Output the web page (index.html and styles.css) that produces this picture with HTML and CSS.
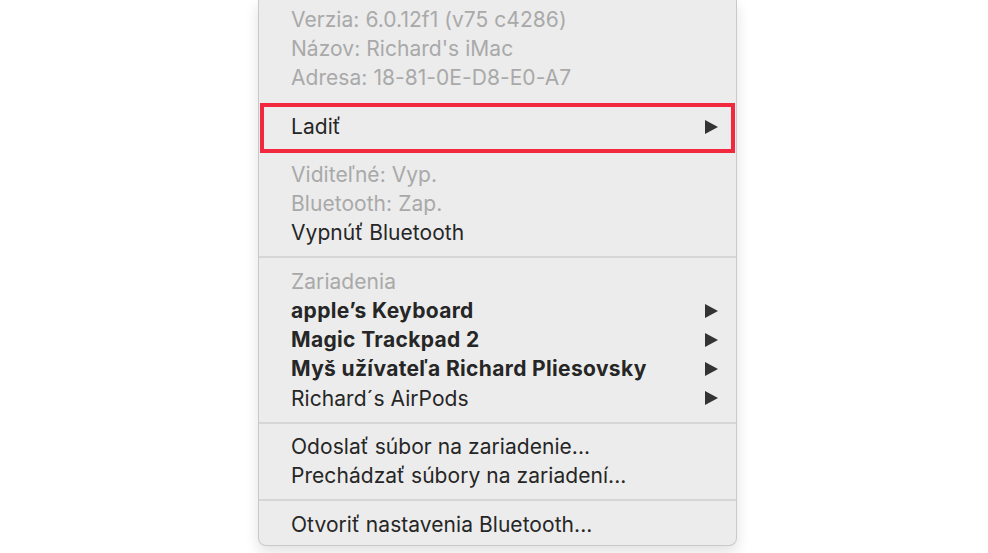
FILE: index.html
```html
<!DOCTYPE html>
<html lang="sk">
<head>
<meta charset="utf-8">
<title>Bluetooth menu</title>
<link rel="stylesheet" href="styles.css">
</head>
<body>
<div class="stage">
  <div class="menu">
    <div class="item dim">Verzia: 6.0.12f1 (v75 c4286)</div>
    <div class="item dim">Názov: Richard's iMac</div>
    <div class="item dim">Adresa: 18-81-0E-D8-E0-A7</div>
    <div class="mark">
      <div class="item sub"><span>Ladiť</span><span class="arrow"></span></div>
    </div>
    <div class="item dim">Viditeľné: Vyp.</div>
    <div class="item dim">Bluetooth: Zap.</div>
    <div class="item">Vypnúť Bluetooth</div>
    <div class="sep"></div>
    <div class="item dim">Zariadenia</div>
    <div class="item sub bold"><span>apple’s Keyboard</span><span class="arrow"></span></div>
    <div class="item sub bold"><span>Magic Trackpad 2</span><span class="arrow"></span></div>
    <div class="item sub bold"><span>Myš užívateľa Richard Pliesovsky</span><span class="arrow"></span></div>
    <div class="item sub"><span>Richard´s AirPods</span><span class="arrow"></span></div>
    <div class="sep"></div>
    <div class="item">Odoslať súbor na zariadenie...</div>
    <div class="item">Prechádzať súbory na zariadení...</div>
    <div class="sep"></div>
    <div class="item">Otvoriť nastavenia Bluetooth...</div>
  </div>
</div>
</body>
</html>
```
FILE: styles.css
```css
html, body {
  margin: 0;
  padding: 0;
  background: #ffffff;
}
.stage {
  width: 988px;
  height: 553px;
  overflow: hidden;
  display: flex;
  justify-content: flex-start;
  align-items: flex-start;
}
.menu {
  margin-left: 258px;
  width: 477px;
  background: #ececec;
  border: 1px solid #c9c9c9;
  border-top: none;
  border-radius: 0 0 8px 8px;
  box-shadow: 0 6px 14px rgba(0,0,0,0.12);
  padding: 4.5px 0 6px 0;
  font-family: Inter, "Noto Sans", sans-serif;
  font-size: 21px;
  color: #262626;
}
.item {
  height: 29.3px;
  line-height: 29.3px;
  padding: 0 18px 0 32px;
  white-space: nowrap;
  letter-spacing: 0.05px;
}
.dim {
  color: #a9a9a9;
}
.bold {
  font-weight: 700;
  letter-spacing: 0.35px;
}
.sub {
  display: flex;
  justify-content: space-between;
  align-items: center;
}
.arrow {
  width: 0;
  height: 0;
  border-top: 7px solid transparent;
  border-bottom: 7px solid transparent;
  border-left: 13px solid #333333;
}
.sep {
  height: 2px;
  background: #d6d6d6;
  margin: 8.5px 0;
}
.mark {
  margin: 10.5px 1px 6.5px 1px;
  border: 4px solid #f2283f;
  padding: 5.5px 0 7.5px 0;
}
.mark .item {
  padding-left: 27px;
  padding-right: 13px;
}
```
